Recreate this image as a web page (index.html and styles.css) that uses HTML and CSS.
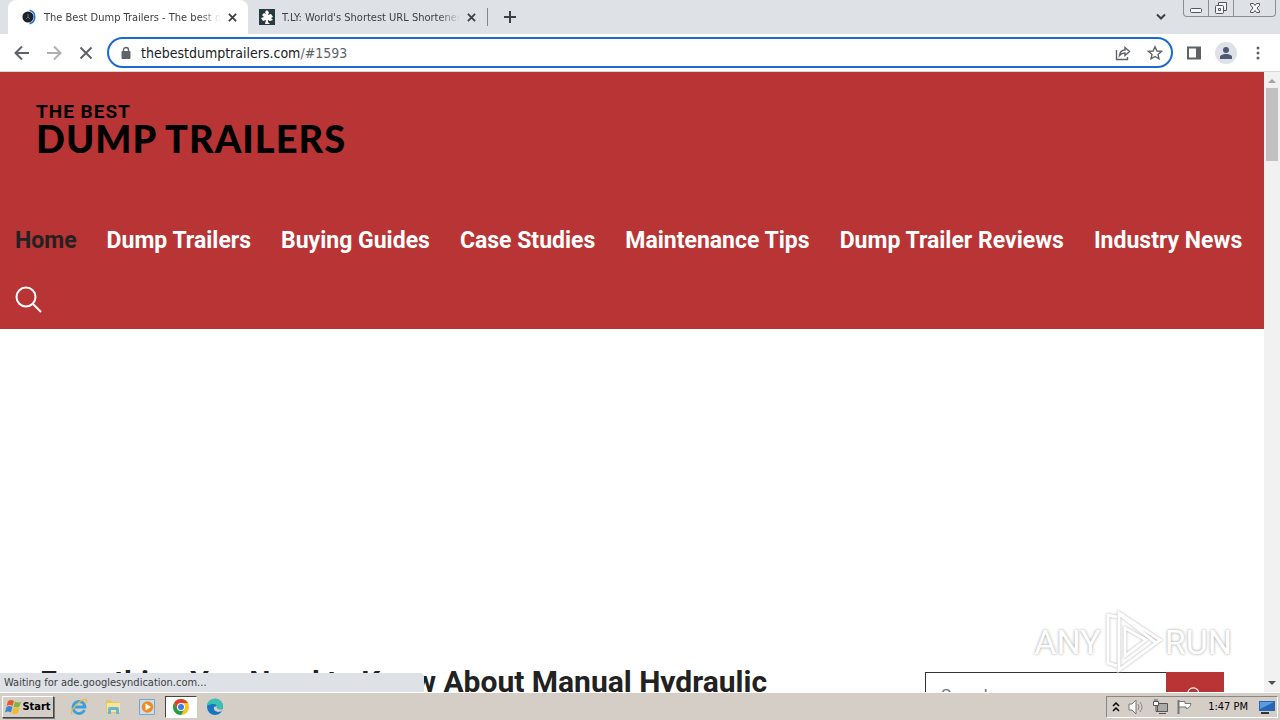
FILE: index.html
```html
<!DOCTYPE html>
<html lang="en">
<head>
  <meta charset="UTF-8">
  <meta name="viewport" content="width=device-width, initial-scale=1.0">
  <title>The Best Dump Trailers</title>
  <link rel="stylesheet" href="styles.css">
</head>
<body>
  <div class="tab-strip">
    <div class="tab active">
      <svg class="favicon" viewBox="0 0 16 16"><circle cx="7" cy="8" r="5.6" fill="#1d2227"/><path d="M7 5v3l-2 2M7 8l2 2" stroke="#68707a" fill="none"/><path d="M8.5 1.3a6.9 6.9 0 0 1 0 13.4" fill="none" stroke="#2878cc" stroke-width="1.6"/></svg>
      <span class="tab-title">The Best Dump Trailers - The best dump trailers</span>
      <button class="tab-close" aria-label="Close tab"><svg viewBox="0 0 10 10"><path d="M1 1l8 8M9 1L1 9"/></svg></button>
    </div>
    <div class="tab">
      <svg class="favicon" viewBox="0 0 16 16"><path fill="#263a40" d="M0 0h16v16H0z"/><path fill="#fff" d="M8 1l2 2.500-1 2.500 3-1 2 3-2 1 2 2-3 1-2-1v2l2 2H6l1-4-3 1-2-3 3-1-2-2 2-2 2 1-1-2z"/></svg>
      <span class="tab-title">T.LY: World's Shortest URL Shortener</span>
      <button class="tab-close" aria-label="Close tab"><svg viewBox="0 0 10 10"><path d="M1 1l8 8M9 1L1 9"/></svg></button>
    </div>
    <button class="new-tab" aria-label="New tab"><svg viewBox="0 0 12 12"><path d="M6 0v12M0 6h12"/></svg></button>
    <button class="tab-search" aria-label="Search tabs"><svg viewBox="0 0 12 8"><path d="M2 1.500l4 4 4-4"/></svg></button>
    <div class="window-buttons">
      <button aria-label="Minimize"><svg viewBox="0 0 24 16"><rect x="6.500" y="8.500" width="11" height="4" rx="1"/></svg></button>
      <button aria-label="Restore"><svg viewBox="0 0 24 16"><path d="M9.500 5V2.500h8v8H15"/><rect x="6.500" y="5.500" width="8" height="8" rx="1"/><path d="M9.500 8.500h2v2h-2z"/></svg></button>
      <button class="close" aria-label="Close"><svg viewBox="0 0 24 16"><path d="M7.500 3.500h3l1.500 2 1.500-2h3v2L14 8l2.500 3v1.500h-3l-1.500-2-1.500 2h-3V11L10 8 7.500 5z"/></svg></button>
    </div>
  </div>

  <div class="toolbar">
    <button aria-label="Back"><svg viewBox="0 0 16 16"><path d="M15 8H2M8 1.500L1.500 8 8 14.500"/></svg></button>
    <button class="disabled" aria-label="Forward"><svg viewBox="0 0 16 16"><path d="M1 8h13M8 1.500L14.500 8 8 14.500"/></svg></button>
    <button aria-label="Stop loading"><svg viewBox="0 0 16 16"><path d="M2.500 2.500l11 11M13.500 2.500l-11 11"/></svg></button>
    <div class="address">
      <svg class="lock" viewBox="0 0 10 14"><path d="M2.500 6V4a2.500 2.500 0 0 1 5 0v2" fill="none" stroke="#5f6368" stroke-width="1.400"/><rect x="0.500" y="5" width="9" height="8" rx="1" fill="#5f6368"/></svg>
      <div class="url" role="textbox" aria-label="Address">thebestdumptrailers.com<span>/#1593</span></div>
      <button aria-label="Share"><svg viewBox="0 0 16 16"><path d="M1.500 5v9.500h11V12M4.500 10.500c.5-4 2.500-5.500 5.500-5.500V2.500L14.500 6.500 10 10.500V8c-2.500 0-4 .5-5.500 2.500z"/></svg></button>
      <button aria-label="Bookmark"><svg viewBox="0 0 16 16"><path d="M8 1.800l1.900 4.200 4.500.4L11 9.400l1 4.500L8 11.500l-4 2.400 1-4.500L1.600 6.400l4.500-.4z"/></svg></button>
    </div>
    <button aria-label="Side panel"><svg viewBox="0 0 16 16"><path d="M2 2.500h12v11H2z"/><path d="M10 2h4.500v12H10z" fill="#5f6368" stroke="none"/></svg></button>
    <button class="profile" aria-label="Profile"><svg viewBox="0 0 22 22"><circle cx="11" cy="11" r="11" fill="#dee1e6"/><circle cx="11" cy="8" r="3" fill="#4c5a75"/><path d="M5 17v-2c0-4 12-4 12 0v2z" fill="#4c5a75"/></svg></button>
    <button aria-label="Menu"><svg viewBox="0 0 16 16"><g fill="#5f6368" stroke="none"><circle cx="8" cy="3" r="1.500"/><circle cx="8" cy="8" r="1.500"/><circle cx="8" cy="13" r="1.500"/></g></svg></button>
  </div>

  <div class="viewport">
    <div class="page">
      <header class="site-header">
        <a class="logo" href="#"><small>THE BEST</small><strong>DUMP TRAILERS</strong></a>
        <nav class="main-nav">
          <a class="current" href="#">Home</a>
          <a href="#">Dump Trailers</a>
          <a href="#">Buying Guides</a>
          <a href="#">Case Studies</a>
          <a href="#">Maintenance Tips</a>
          <a href="#">Dump Trailer Reviews</a>
          <a href="#">Industry News</a>
          <a href="#" aria-label="Search"><svg viewBox="0 0 28 28"><circle cx="11" cy="11" r="9.500"/><path d="M18 18l8 8"/></svg></a>
        </nav>
      </header>
      <div class="content">
        <main>
          <h1>Everything You Need to Know About Manual Hydraulic</h1>
        </main>
        <aside>
          <form class="search-form">
            <input type="search" placeholder="Search …" aria-label="Search">
            <button type="button" aria-label="Search"><svg viewBox="0 0 28 28"><circle cx="11" cy="11" r="9.500"/><path d="M18 18l8 8"/></svg></button>
          </form>
        </aside>
      </div>
    </div>
    <div class="scrollbar">
      <svg viewBox="0 0 16 16"><path d="M4 11l4-4 4 4z" fill="#a3a3a3"/></svg>
      <div class="thumb"></div>
      <svg viewBox="0 0 16 16"><path d="M4 5l4 4 4-4z" fill="#505050"/></svg>
    </div>
    <div class="status">Waiting for ade.googlesyndication.com...</div>
    <div class="watermark">
      <span>ANY</span>
      <svg viewBox="0 0 60 64"><path d="M16 3L57 30 16 60zM22 18v28l21-16zM14 7L5 5v48l9 3M16 4l36 28" /></svg>
      <span>RUN</span>
    </div>
  </div>

  <footer class="taskbar">
    <button class="start">
      <svg viewBox="0 0 16 16"><path d="M3 2q3-2 6 0L7.500 7q-3-2-6 0z" fill="#e65a28"/><path d="M10 2.500q3 2 6 0L14.500 7.500q-3 2-6 0z" fill="#7fb63a"/><path d="M1.500 8q3-2 6 0L6 13.500q-3-2-6 0z" fill="#3d83cf"/><path d="M8.500 8.500q3 2 6 0L13 14q-3 2-6 0z" fill="#f5b921"/></svg>
      Start
    </button>
    <div class="quick-launch">
      <button aria-label="Internet Explorer"><svg viewBox="0 0 18 18"><path d="M14.500 12a6 6 0 1 1 .5-3H5" fill="none" stroke="#38a0dd" stroke-width="2.800"/><path d="M2 16C-1 12 13-1 16.500 2q1 1-.5 3" fill="none" stroke="#eebc3b" stroke-width="1.300"/></svg></button>
      <button aria-label="Windows Explorer"><svg viewBox="0 0 18 18"><path d="M2 2h5l1 2h7v11H2z" fill="#e5c765"/><path d="M3 5h13v9H3z" fill="#f6e69c"/><path d="M4 16v-5q0-2 2-2h7q2 0 2 2v5h-3v-4H7v4z" fill="#69b3d9"/></svg></button>
      <button aria-label="Media Player"><svg viewBox="0 0 18 18"><path d="M1.500 1.500h15v15h-15z" fill="#c8dff0" stroke="#79a4cc"/><circle cx="9.500" cy="9" r="5.800" fill="#f38a1c"/><path d="M7.500 5.500l5.500 3.500-5.500 3.500z" fill="#fff"/></svg></button>
      <button class="running" aria-label="Google Chrome"><svg viewBox="0 0 18 18"><circle cx="9" cy="9" r="8" fill="#f9c51d"/><path d="M2.070 5A8 8 0 0 1 15.930 5H9L5.540 11z" fill="#df4031"/><path d="M2.070 5A8 8 0 0 0 9 17l3.460-6-6.920 0z" fill="#279b50"/><circle cx="9" cy="9" r="4" fill="#fff"/><circle cx="9" cy="9" r="3" fill="#4079e0"/></svg></button>
      <button aria-label="Microsoft Edge"><svg viewBox="0 0 18 18"><circle cx="9" cy="9" r="8" fill="#1775c4"/><path d="M1 8a8 8 0 0 1 16 1c0 3-4 4-6 2 1-3-1-5-4-5-3 0-5 1-6 2z" fill="#39c1b1"/><path d="M8 9q-1 4 4 5 3 0 5-2v-1q-3 1-5 0-2-1-1-3z" fill="#d5cec7"/></svg></button>
    </div>
    <div class="tray">
      <svg class="chevrons" viewBox="0 0 8 12"><path d="M1 5l3-3 3 3M1 10l3-3 3 3" fill="none" stroke="#000" stroke-width="1.500"/></svg>
      <svg viewBox="0 0 16 16"><path d="M1 5h3l4-4v14l-4-4H1z" fill="#fff" stroke="#777"/><path d="M10 5q2 3 0 6M12 3q4 5 0 10" fill="none" stroke="#888"/></svg>
      <svg viewBox="0 0 16 16"><path d="M5.500 4.500h10v8h-10z" fill="#aaa" stroke="#555"/><path d="M7 14.500h7M4 6v6.500h2M3 0v3M5 0v3" fill="none" stroke="#555"/><path d="M1.500 2.500h5v4h-5z" fill="#fff" stroke="#555"/></svg>
      <svg viewBox="0 0 16 16"><path d="M2.500 1v14" stroke="#777" stroke-width="2"/><path d="M3 2.500h6v2h6q-1 5-5 5V8H3z" fill="#fff" stroke="#777"/></svg>
      <time>1:47 PM</time>
      <svg viewBox="0 0 16 16"><path d="M0 2h16v10H0z" fill="#2765b5"/><path d="M1 3h14L1 10z" fill="#5c9ce0"/><path d="M2 13h8v2H2z" fill="#333"/></svg>
    </div>
  </footer>
</body>
</html>
```
FILE: styles.css
```css
* {
  box-sizing: border-box;
}
body {
  display: flex;
  flex-direction: column;
  height: 100vh;
  margin: 0;
  overflow: hidden;
  background: #fff;
  color: #222;
  font-family: "DejaVu Sans Condensed", "DejaVu Sans", sans-serif;
  font-size: 11px;
}
button {
  flex: none;
  display: flex;
  align-items: center;
  justify-content: center;
  padding: 0;
  border: 0;
  background: none;
  color: inherit;
  font: inherit;
}
svg {
  flex: none;
  display: block;
}

/* browser tabs */
.tab-strip {
  flex: none;
  display: flex;
  height: 34px;
  padding-left: 8px;
  background: #dee1e6;
}
.tab {
  display: flex;
  align-items: center;
  width: 239px;
  padding: 0 8px 0 11px;
  color: #3c4043;
}
.tab.active {
  width: 240px;
  padding-left: 13px;
  border-radius: 8px 8px 0 0;
  background: #fff;
}
.favicon {
  width: 16px;
  height: 16px;
  margin-right: 7px;
}
.tab-title {
  flex: 1;
  overflow: hidden;
  white-space: nowrap;
  mask-image: linear-gradient(to right, #000 88%, transparent);
}
.tab-close {
  width: 16px;
  height: 16px;
  margin-left: 3px;
}
.tab-close svg {
  width: 9px;
  height: 9px;
}
.tab-strip button svg {
  fill: none;
  stroke: #3c4043;
  stroke-width: 2;
}
.new-tab {
  width: 44px;
  height: 18px;
  margin-top: 8px;
  border-left: 1px solid #80868b;
}
.new-tab svg {
  width: 12px;
  height: 12px;
}
.tab-search {
  width: 20px;
  margin-left: auto;
}
.tab-search svg {
  width: 12px;
  height: 8px;
}
.window-buttons {
  display: flex;
  height: 17px;
  margin: 0 4px 0 12px;
  border: 1px solid #8b8e94;
  border-top: 0;
  border-radius: 0 0 4px 4px;
}
.window-buttons button {
  width: 25px;
  border-right: 1px solid #8b8e94;
}
.window-buttons .close {
  width: 41px;
  border: 0;
}
.window-buttons button svg {
  width: 24px;
  height: 16px;
  fill: #f4f5f7;
  stroke: #53565c;
  stroke-width: 1;
}

/* address bar */
.toolbar {
  flex: none;
  display: flex;
  align-items: center;
  height: 38px;
  padding: 0 6px;
  border-bottom: 1px solid #d5d7da;
}
.toolbar button {
  width: 32px;
  height: 32px;
}
.toolbar button svg {
  width: 16px;
  height: 16px;
  fill: none;
  stroke: #5f6368;
  stroke-width: 2;
}
.toolbar .disabled {
  opacity: .5;
}
.toolbar .address svg {
  stroke-width: 1.4;
}
.toolbar .profile svg {
  width: 22px;
  height: 22px;
  stroke: none;
}
.address {
  flex: 1;
  display: flex;
  align-items: center;
  height: 31px;
  margin: 0 5px;
  padding-left: 12px;
  border: 2px solid #1b6ad0;
  border-radius: 16px;
}
.lock {
  width: 10px;
  height: 14px;
}
.url {
  flex: 1;
  margin-left: 10px;
  color: #202124;
  font-size: 14px;
}
.url span {
  color: #5f6368;
}

/* web page */
.viewport {
  flex: 1;
  display: flex;
  min-height: 0;
  position: relative;
}
.page {
  flex: 1;
  overflow: hidden;
}
.site-header {
  background: #b93434;
}
.logo {
  display: flex;
  flex-direction: column;
  height: 139px;
  padding: 30px 36px;
  color: #000;
  text-decoration: none;
}
.logo small {
  font: bold 19px/20px Roboto, sans-serif;
  letter-spacing: 1px;
}
.logo strong {
  font: 900 38px/32px Lato, sans-serif;
  letter-spacing: 1px;
}
.main-nav {
  display: flex;
  flex-wrap: wrap;
}
.main-nav a {
  display: flex;
  align-items: center;
  height: 59px;
  padding: 0 15px;
  color: #fff;
  font: bold 23px Roboto, sans-serif;
  text-decoration: none;
}
.main-nav .current {
  color: #222;
}
.main-nav svg,
.search-form svg {
  width: 28px;
  height: 28px;
  fill: none;
  stroke: #fff;
  stroke-width: 2;
}
.content {
  display: flex;
  justify-content: space-between;
  padding: 333px 40px 0;
}
h1 {
  margin: 0;
  font: bold 30px/40px Roboto, sans-serif;
  white-space: nowrap;
}
.search-form {
  display: flex;
  width: 299px;
  margin-top: 10px;
}
.search-form input {
  flex: 1;
  min-width: 0;
  height: 46px;
  padding: 0 15px;
  border: 1px solid #333;
  border-right: 0;
  border-radius: 0;
  background: #fff;
  font: 17px Roboto, sans-serif;
}
.search-form button {
  width: 58px;
  background: #b93434;
}
.search-form svg {
  width: 16px;
  height: 16px;
}
.scrollbar {
  display: flex;
  flex-direction: column;
  width: 16px;
  background: #f1f1f1;
}
.scrollbar svg {
  width: 16px;
  height: 16px;
}
.thumb {
  height: 73px;
  margin: 0 2px auto;
  background: #c1c1c1;
}
.status {
  position: absolute;
  left: 0;
  bottom: 0;
  width: 424px;
  height: 19px;
  padding-left: 4px;
  border-radius: 0 4px 0 0;
  background: #dee1e6;
  color: #3c4043;
  line-height: 20px;
}
.watermark {
  position: absolute;
  right: 48px;
  bottom: 18px;
  display: flex;
  align-items: center;
  gap: 2px;
  color: #fff;
  font: 34px Roboto, sans-serif;
  text-shadow: 0 0 3px #999;
}
.watermark svg {
  width: 60px;
  height: 64px;
  fill: none;
  stroke: #fff;
  stroke-width: 3;
  filter: drop-shadow(0 0 1px #aaa);
}

/* desktop taskbar */
.taskbar {
  flex: none;
  display: flex;
  align-items: center;
  height: 28px;
  padding: 2px;
  border-top: 1px solid #fff;
  background: #d5cec7;
  color: #000;
}
.start {
  gap: 1px;
  width: 52px;
  height: 22px;
  border: 1px solid;
  border-color: #fff #444 #444 #fff;
  box-shadow: 1px 1px #777;
  font-weight: bold;
}
.start svg {
  width: 16px;
  height: 16px;
}
.quick-launch {
  display: flex;
  gap: 2px;
  margin-left: 9px;
}
.quick-launch button {
  width: 32px;
  height: 22px;
}
.quick-launch .running {
  border: 1px solid;
  border-color: #444 #fff #fff #444;
  background: #fff;
}
.quick-launch svg {
  width: 18px;
  height: 18px;
}
.tray {
  display: flex;
  align-items: center;
  gap: 8px;
  height: 22px;
  margin-left: auto;
  padding: 0 2px 0 5px;
  border: 1px solid;
  border-color: #888 #fff #fff #888;
}
.tray svg {
  width: 16px;
  height: 16px;
}
.tray .chevrons {
  width: 8px;
  height: 12px;
}
.tray time {
  margin: 0 3px 0 8px;
}
```
